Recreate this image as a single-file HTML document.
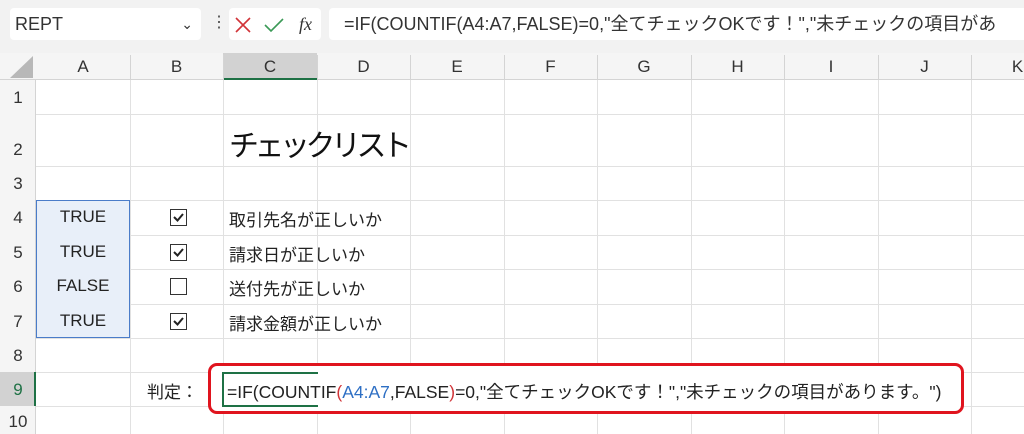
<!DOCTYPE html>
<html><head><meta charset="utf-8"><style>
*{margin:0;padding:0;box-sizing:border-box}
body{width:1024px;height:434px;overflow:hidden;background:#fff;position:relative;font-family:"Liberation Sans","Noto Sans CJK JP",sans-serif;color:#222}
.a{position:absolute}
.vl{position:absolute;width:1px;background:#e1e1e1;top:80px;height:354px}
.hl{position:absolute;height:1px;background:#e1e1e1;left:36px;width:988px}
.ch{position:absolute;top:53px;height:27px;line-height:27px;text-align:center;font-size:17px;color:#333}
.rh{position:absolute;left:0;width:36px;text-align:center;font-size:17px;color:#333}
.cb{position:absolute;left:170px;width:17px;height:17px;border:1.5px solid #333;background:#fff}
.jp{position:absolute;left:229px;font-size:17px}
.tv{position:absolute;left:36px;width:94px;text-align:center;font-size:17px}
</style></head><body>
<div class="a" style="left:0;top:0;width:1024px;height:53px;background:#f2f2f2"></div>
<div class="a" style="left:10px;top:8px;width:191px;height:32px;background:#fff;border-radius:4px;font-size:18px;line-height:32px;padding-left:5px;color:#333">REPT<span style="position:absolute;right:8px;font-size:14px">&#8964;</span></div>
<div class="a" style="left:211px;top:14px;font-size:16px;color:#444;line-height:18px">&#8942;</div>
<div class="a" style="left:229px;top:8px;width:92px;height:32px;background:#fff;border-radius:4px"></div>
<svg class="a" style="left:233px;top:14px" width="84" height="22"><path d="M3 4L17 18M17 4L3 18" stroke="#d13438" stroke-width="1.6"/><path d="M32 11L38 17L50 5" stroke="#3b9a57" stroke-width="1.6" fill="none"/><text x="66" y="16" font-family="Liberation Serif" font-style="italic" font-size="18" fill="#333">fx</text></svg>
<div class="a" style="left:329px;top:8px;width:700px;height:32px;background:#fff;border-radius:4px;font-size:18px;line-height:32px;padding-left:15px;color:#333;white-space:nowrap">=IF(COUNTIF(A4:A7,FALSE)=0,"全てチェックOKです！","未チェックの項目があ</div>
<div class="a" style="left:0;top:53px;width:1024px;height:27px;background:#f5f5f5;border-bottom:1px solid #d4d4d4"></div>
<div class="a" style="left:0;top:80px;width:36px;height:354px;background:#f5f5f5;border-right:1px solid #d4d4d4"></div>
<svg class="a" style="left:8px;top:55px" width="26" height="24"><path d="M25 1L25 23L2 23Z" fill="#b8b8b8"/></svg>
<div class="a" style="left:223px;top:53px;width:94px;height:27px;background:#d2d2d2;border-bottom:2px solid #1e7145"></div>
<div class="a" style="left:0;top:372px;width:36px;height:34px;background:#d2d2d2;border-right:2px solid #1e7145"></div>
<div class="ch" style="left:36px;width:94px">A</div><div class="ch" style="left:130px;width:93px">B</div><div class="ch" style="left:223px;width:94px">C</div><div class="ch" style="left:317px;width:93px">D</div><div class="ch" style="left:410px;width:94px">E</div><div class="ch" style="left:504px;width:93px">F</div><div class="ch" style="left:597px;width:94px">G</div><div class="ch" style="left:691px;width:93px">H</div><div class="ch" style="left:784px;width:94px">I</div><div class="ch" style="left:878px;width:93px">J</div><div class="ch" style="left:971px;width:93px">K</div>
<div class="a" style="left:130px;top:55px;width:1px;height:25px;background:#d4d4d4"></div><div class="a" style="left:223px;top:55px;width:1px;height:25px;background:#d4d4d4"></div><div class="a" style="left:317px;top:55px;width:1px;height:25px;background:#d4d4d4"></div><div class="a" style="left:410px;top:55px;width:1px;height:25px;background:#d4d4d4"></div><div class="a" style="left:504px;top:55px;width:1px;height:25px;background:#d4d4d4"></div><div class="a" style="left:597px;top:55px;width:1px;height:25px;background:#d4d4d4"></div><div class="a" style="left:691px;top:55px;width:1px;height:25px;background:#d4d4d4"></div><div class="a" style="left:784px;top:55px;width:1px;height:25px;background:#d4d4d4"></div><div class="a" style="left:878px;top:55px;width:1px;height:25px;background:#d4d4d4"></div><div class="a" style="left:971px;top:55px;width:1px;height:25px;background:#d4d4d4"></div>
<div class="vl" style="left:130px"></div><div class="vl" style="left:223px"></div><div class="vl" style="left:317px"></div><div class="vl" style="left:410px"></div><div class="vl" style="left:504px"></div><div class="vl" style="left:597px"></div><div class="vl" style="left:691px"></div><div class="vl" style="left:784px"></div><div class="vl" style="left:878px"></div><div class="vl" style="left:971px"></div>
<div class="hl" style="top:114px"></div><div class="hl" style="top:166px"></div><div class="hl" style="top:200px"></div><div class="hl" style="top:235px"></div><div class="hl" style="top:269px"></div><div class="hl" style="top:304px"></div><div class="hl" style="top:338px"></div><div class="hl" style="top:372px"></div><div class="hl" style="top:406px"></div>
<div class="rh" style="top:88px">1</div><div class="rh" style="top:140px">2</div><div class="rh" style="top:174px">3</div><div class="rh" style="top:208px">4</div><div class="rh" style="top:243px">5</div><div class="rh" style="top:277px">6</div><div class="rh" style="top:312px">7</div><div class="rh" style="top:346px">8</div><div class="rh" style="top:380px;color:#1e7145">9</div><div class="rh" style="top:412px">10</div>
<div class="a" style="left:36px;top:200px;width:94px;height:138px;background:#e8eff9;border:1px solid #4a7cc9"></div>
<div class="tv" style="top:207px">TRUE</div><div class="tv" style="top:242px">TRUE</div><div class="tv" style="top:276px">FALSE</div><div class="tv" style="top:311px">TRUE</div>
<div class="cb" style="top:209px"></div><div class="cb" style="top:244px"></div><div class="cb" style="top:278px"></div><div class="cb" style="top:313px"></div>
<svg class="a" style="left:170px;top:209px" width="17" height="140"><g stroke="#222" stroke-width="2" fill="none"><path d="M4 8L7.5 11.5L13 5"/><path d="M4 43L7.5 46.5L13 40"/><path d="M4 112L7.5 115.5L13 109"/></g></svg>
<div class="a" style="left:229px;top:121px;font-size:30px;letter-spacing:-4.5px;color:#111">チェックリスト</div>
<div class="jp" style="top:206px">取引先名が正しいか</div><div class="jp" style="top:241px">請求日が正しいか</div><div class="jp" style="top:275px">送付先が正しいか</div><div class="jp" style="top:310px">請求金額が正しいか</div>
<div class="a" style="left:147px;top:378px;font-size:17px">判定：</div>
<div class="a" style="left:208px;top:363px;width:756px;height:51px;background:#fff;border:3px solid #e0141e;border-radius:9px"></div>
<div class="a" style="left:222px;top:372px;width:96px;height:35px;border:2px solid #1e7145;border-right:none"></div>
<div class="a" style="left:227px;top:379px;font-size:17.5px;white-space:nowrap;color:#222">=IF(COUNTIF<span style="color:#d13438">(</span><span style="color:#2e6fc4">A4:A7</span>,FALSE<span style="color:#d13438">)</span>=0,"全てチェックOKです！","未チェックの項目があります。")</div>
</body></html>
